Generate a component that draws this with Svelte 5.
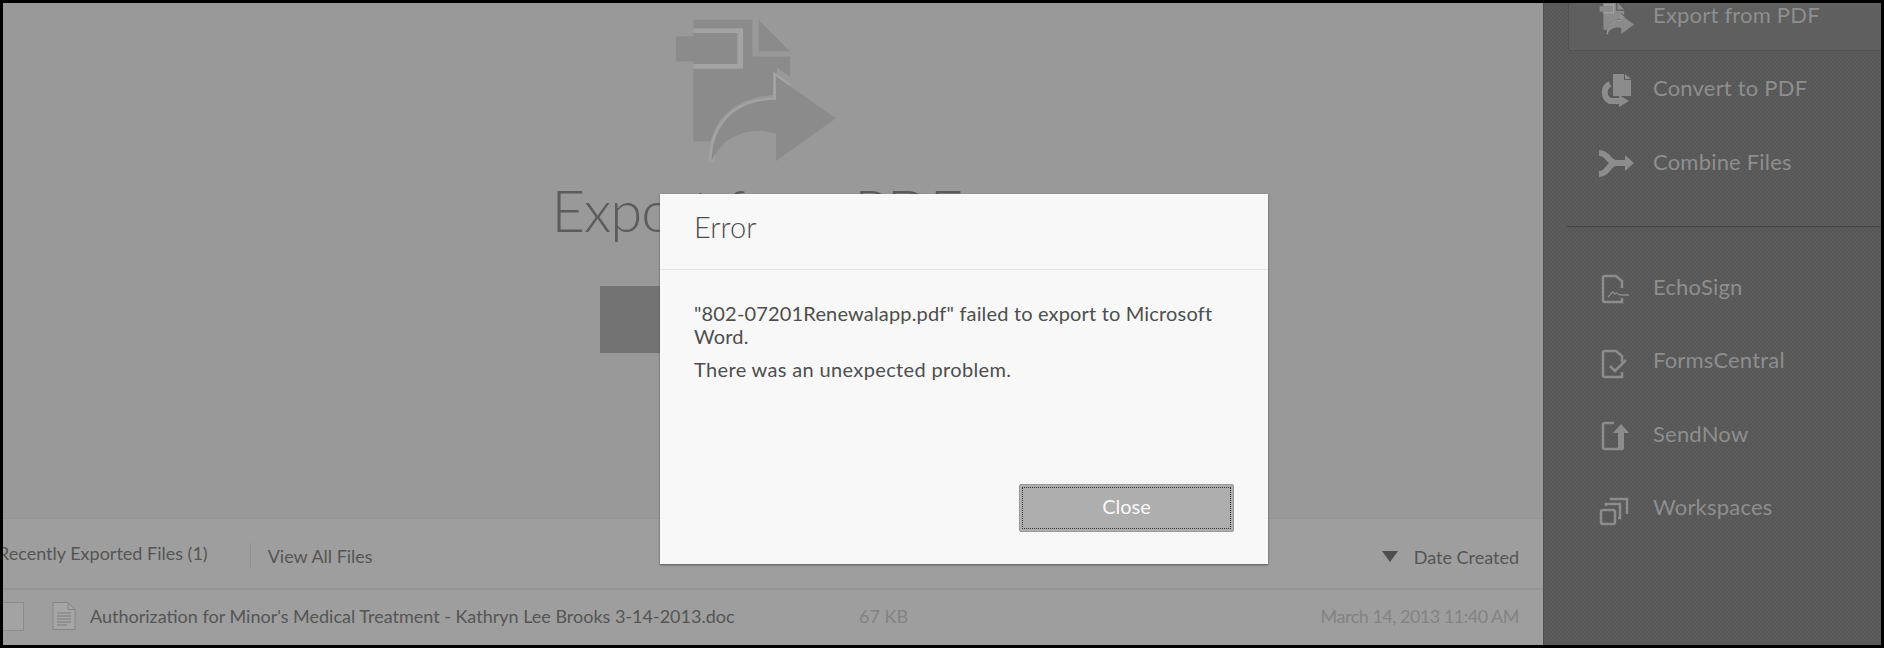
<script>
  const topLinks = [
    { name: "Export from PDF", icon: "export", active: true },
    { name: "Convert to PDF", icon: "convert" },
    { name: "Combine Files", icon: "combine" }
  ];
  const serviceLinks = [
    { name: "EchoSign", icon: "echo" },
    { name: "FormsCentral", icon: "forms" },
    { name: "SendNow", icon: "send" },
    { name: "Workspaces", icon: "spaces" }
  ];
</script>

{#snippet bigIcon()}
  <path class="doc" d="M130 55 H275 V165 H367 V225 L335 198 V280 C240 285 190 340 172 420 H130 Z" />
  <polygon class="doc" points="290,55 367,150 290,150" />
  <path class="gap" d="M130 88 H245 V195 H130" />
  <rect class="doc" x="87" y="105" width="143" height="75" />
  <path class="gap" d="M175 480 C175 380 225 295 333 295 V225 L367 254" />
  <path class="doc" d="M333 225 L480 350 L333 478 V395 C270 375 200 400 175 480 C175 380 225 295 333 295 Z" />
{/snippet}

{#snippet navIcon(name)}
  {#if name === "export"}
    <svg class="ic small" viewBox="80 50 410 440" width="36" height="33" preserveAspectRatio="none">
      {@render bigIcon()}
    </svg>
  {:else if name === "convert"}
    <svg class="ic" viewBox="0 0 40 40" width="40" height="40">
      <path class="fill" d="M15 6 H26 V12 H33 V28 H15 Z" />
      <path class="fill" d="M27 6 L33 11 H27 Z" />
      <path class="line thick" d="M12 16 A9.5 9.5 0 0 0 12 33 H22" />
      <polygon class="fill" points="21,27 31,33 21,39" />
    </svg>
  {:else if name === "combine"}
    <svg class="ic" viewBox="0 0 40 40" width="40" height="40">
      <path class="line thick" d="M1 12 C11 12 10 22 18 22 H29 M1 33 C11 33 10 22 18 22" />
      <polygon class="fill" points="27,14 36,22 27,30" />
    </svg>
  {:else if name === "echo"}
    <svg class="ic" viewBox="0 0 40 40" width="40" height="40">
      <path class="line" d="M24 22 V15 L18 10 H7 Q5 10 5 12 V34 Q5 36 7 36 H24 V32" />
      <path class="line hair" d="M10 31 C13 28 15 24 16 27 C16 30 18 26 19 27 C20 29 22 29 31 29" />
    </svg>
  {:else if name === "forms"}
    <svg class="ic" viewBox="0 0 40 40" width="40" height="40">
      <path class="line" d="M24 22 V16 L18 11 H7 Q5 11 5 13 V35 Q5 37 7 37 H24 V32" />
      <path class="line" d="M12 26 L17 31 L28 20" />
    </svg>
  {:else if name === "send"}
    <svg class="ic" viewBox="0 0 40 40" width="40" height="40">
      <path class="line" d="M16 10 H7 Q5 10 5 12 V34 Q5 36 7 36 H24 V28" />
      <polygon class="fill" points="15,20 23,11 31,20 26,20 26,36 20,36 20,20" />
    </svg>
  {:else if name === "spaces"}
    <svg class="ic" viewBox="0 0 40 40" width="40" height="40">
      <rect class="line" x="3" y="23" width="14" height="14" rx="2" />
      <path class="line" d="M8 19 V17 H22 V31 H20" />
      <path class="line" d="M13 13 V12 H29 V27" />
    </svg>
  {/if}
{/snippet}

<div class="frame">
  <main class="main">
    <section class="hero">
      <svg class="hero-icon" viewBox="80 50 410 440" width="167" height="147" preserveAspectRatio="none">
        {@render bigIcon()}
      </svg>
      <h1>Export from PDF</h1>
      <div class="hero-btn"></div>
    </section>

    <section class="files">
      <div class="files-head">
        <span class="recent">Recently Exported Files (1)</span>
        <span class="sep"></span>
        <span class="all">View All Files</span>
        <span class="sort"><i class="tri"></i>Date Created</span>
      </div>
      <div class="file-row">
        <span class="check"></span>
        <svg class="file-ic" viewBox="0 0 24 28" width="24" height="28">
          <path d="M1 .5 H16 L23 7.5 V27.5 H1 Z" fill="#a6a6a6" stroke="#848484" />
          <path d="M16 .5 V7.5 H23" fill="none" stroke="#848484" />
          <path d="M5 11 H19 M5 14 H19 M5 17 H19 M5 20 H19 M5 23 H15" stroke="#7c7c7c" />
        </svg>
        <span class="file-name">Authorization for Minor's Medical Treatment - Kathryn Lee Brooks 3-14-2013.doc</span>
        <span class="file-size">67 KB</span>
        <span class="file-date">March 14, 2013 11:40 AM</span>
      </div>
    </section>
  </main>

  <aside class="side">
    <nav>
      {#each topLinks as link}
        <div class="item" class:active={link.active}>
          <span class="slot">{@render navIcon(link.icon)}</span>
          {link.name}
        </div>
      {/each}
      <div class="rule"></div>
      {#each serviceLinks as link}
        <div class="item">
          <span class="slot">{@render navIcon(link.icon)}</span>
          {link.name}
        </div>
      {/each}
    </nav>
  </aside>

  <div class="modal">
    <header>Error</header>
    <div class="modal-body">
      <p class="first">"802-07201Renewalapp.pdf" failed to export to Microsoft Word.</p>
      <p class="second">There was an unexpected problem.</p>
    </div>
    <footer>
      <button>Close</button>
    </footer>
  </div>
</div>

<style>
  :global(body) {
    margin: 0;
    background: #000;
  }

  .frame {
    position: relative;
    box-sizing: border-box;
    width: 1884px;
    height: 648px;
    border: 3px solid #000;
    display: flex;
    overflow: hidden;
    font-family: Lato, "Liberation Sans", sans-serif;
  }

  .main {
    width: 1540px;
    display: flex;
    flex-direction: column;
    background: #999;
  }

  .hero {
    height: 515px;
    box-sizing: border-box;
    padding: 15px 33px 0 0;
    display: flex;
    flex-direction: column;
    align-items: center;
  }

  .hero-icon {
    display: block;
  }

  .doc {
    fill: #8b8b8b;
  }

  .gap {
    fill: none;
    stroke: #a3a3a3;
    stroke-width: 14;
  }

  h1 {
    margin: 8px 0 0;
    font-size: 58px;
    line-height: 74px;
    font-weight: 300;
    letter-spacing: -1px;
    color: #5c5c5c;
  }

  .hero-btn {
    width: 312px;
    height: 67px;
    margin-top: 39px;
    margin-left: -2px;
    background: #737373;
  }

  .files {
    flex: 1;
    background: #9e9e9e;
    border-top: 1px solid #939393;
    color: #555;
    font-size: 18px;
  }

  .files-head {
    height: 71px;
    box-sizing: border-box;
    display: flex;
    align-items: center;
    padding: 4px 24px 0 0;
    border-bottom: 2px solid #939393;
  }

  .recent {
    margin-left: -5px;
    margin-top: -6px;
  }

  .sep {
    width: 1px;
    height: 25px;
    background: #8f8f8f;
    margin: 0 17px 0 42px;
  }

  .sort {
    margin-left: auto;
    margin-top: 2px;
    display: flex;
    align-items: center;
  }

  .tri {
    width: 0;
    height: 0;
    border-left: 8px solid transparent;
    border-right: 8px solid transparent;
    border-top: 11px solid #4f4f4f;
    margin-right: 16px;
  }

  .file-row {
    display: flex;
    align-items: center;
    height: 52px;
    padding-right: 24px;
  }

  .check {
    width: 24px;
    height: 29px;
    margin-left: -3px;
    box-sizing: border-box;
    border: 1px solid #8b8b8b;
    border-left: 0;
    background: #a3a3a3;
  }

  .file-ic {
    margin-left: 28px;
  }

  .file-name {
    margin-left: 14px;
    width: 769px;
  }

  .file-size {
    color: #838383;
  }

  .file-date {
    margin-left: auto;
    color: #838383;
    letter-spacing: -0.5px;
  }

  .side {
    flex: 1;
    background-color: #5a5a5a;
    background-image: conic-gradient(#575757 25%, #5c5c5c 0 50%, #575757 0 75%, #5c5c5c 0);
    background-size: 4px 4px;
    border-left: 1px solid #4d4d4d;
    color: #8e8e8e;
    font-size: 22px;
    letter-spacing: 0.2px;
  }

  nav {
    margin-top: -25.5px;
  }

  .item {
    height: 73.6px;
    box-sizing: border-box;
    margin-left: 24px;
    padding-left: 30px;
    display: flex;
    align-items: center;
  }

  .active {
    background: #5f5f5f;
    border: 1px solid #525252;
    border-right: 0;
    padding-left: 29px;
  }

  .slot {
    width: 40px;
    height: 40px;
    margin-right: 15px;
    flex: none;
  }

  .ic {
    display: block;
  }

  .small {
    margin: 8px 0 0 1px;
  }

  .fill {
    fill: #8c8c8c;
  }

  .line {
    fill: none;
    stroke: #8c8c8c;
    stroke-width: 2.5;
  }

  .line.thick {
    stroke-width: 6;
  }

  .line.hair {
    stroke-width: 1.4;
  }

  .rule {
    height: 1px;
    margin: 28px 0 22px 23px;
    background: #454545;
  }

  .modal {
    position: absolute;
    left: 657px;
    top: 191px;
    width: 608px;
    height: 370px;
    display: flex;
    flex-direction: column;
    background: #f8f8f8;
    box-shadow: 0 1px 2px #555;
    color: #4e4e4e;
  }

  header {
    height: 76px;
    box-sizing: border-box;
    padding: 16px 34px 0;
    border-bottom: 1px solid #e2e2e2;
    font-size: 29px;
    font-weight: 300;
    line-height: 34px;
  }

  .modal-body {
    flex: 1;
    padding: 32px 34px 0;
    font-size: 20px;
    line-height: 23px;
  }

  .modal-body p {
    margin: 0 0 10px;
  }

  .first {
    letter-spacing: 0.17px;
  }

  .second {
    letter-spacing: 0.35px;
  }

  footer {
    display: flex;
    justify-content: flex-end;
    padding: 0 34px 32px;
  }

  button {
    position: relative;
    width: 215px;
    height: 48px;
    background: #aeaeae;
    border: 1px solid #9b9b9b;
    border-radius: 2px;
    color: #f8f8f8;
    font: 20px Lato, "Liberation Sans", sans-serif;
    padding: 0 0 5px;
  }

  button::after {
    content: "";
    position: absolute;
    inset: 2px;
    border: 1px dotted #333;
  }
</style>
